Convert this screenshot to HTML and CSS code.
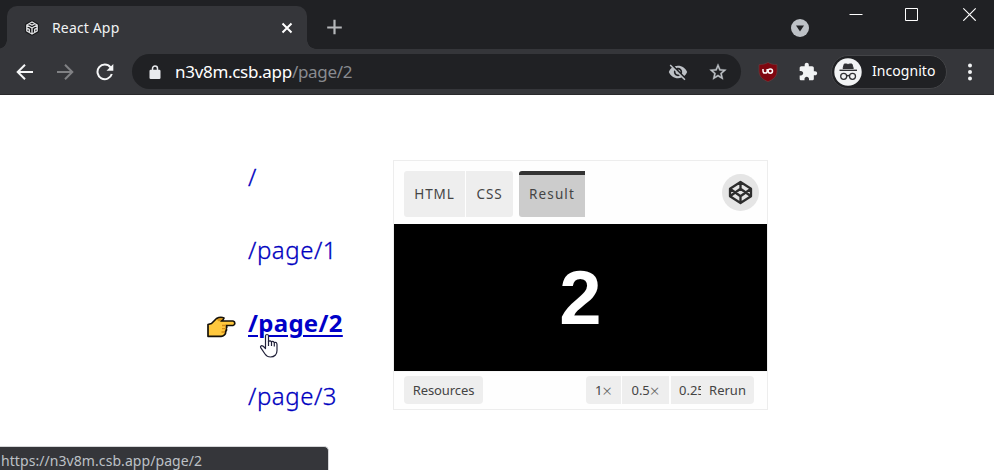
FILE: index.html
```html
<!DOCTYPE html>
<html lang="en">
<head>
<meta charset="utf-8">
<title>React App</title>
<link rel="stylesheet" href="styles.css">
</head>
<body>
<header class="browser">
  <div class="tabstrip">
    <div class="tab">
      <svg class="favicon" viewBox="0 0 16 16"><path fill="#17181a" stroke="#17181a" stroke-width="2.500" stroke-linejoin="round" d="M8 1.500 13.600 4.700V11.300L8 14.500 2.400 11.300V4.700Z"/><path fill="none" stroke="#e4e5e7" stroke-width="1.300" stroke-linejoin="round" d="M8 2 13.200 5V11L8 14 2.800 11V5ZM2.800 5 8 8 13.200 5M8 8V14M5.300 3.600 8 5.200 10.700 3.600M2.800 8 5.300 9.400V12.400M13.200 8 10.700 9.400V12.400"/></svg>
      <span class="tab-title">React App</span>
      <svg class="tab-close" viewBox="0 0 12 12"><path d="M1.500 1.500 10.500 10.500M10.500 1.500 1.500 10.500" stroke="#fff" stroke-width="2"/></svg>
    </div>
    <svg class="new-tab" viewBox="0 0 16 16"><path d="M7.500 .7V15.300M.2 8.500H14.800" stroke="#b5b7ba" stroke-width="2.200"/></svg>
    <svg class="tab-search" viewBox="0 0 18 18"><circle cx="9" cy="9" r="9" fill="#bdc1c6"/><path d="M5 6.500H13L9 12.500Z" fill="#202124"/></svg>
    <div class="window-buttons">
      <svg viewBox="0 0 14 14"><path d="M.5 7.500H13.500" stroke="#fff"/></svg>
      <svg viewBox="0 0 14 14"><path d="M.5 1.500H12.500V13.500H.5Z" fill="none" stroke="#fff"/></svg>
      <svg viewBox="0 0 14 14"><path d="M.3 1.300 12.700 13.700M12.700 1.300 .3 13.700" stroke="#fff" stroke-width="1.200"/></svg>
    </div>
  </div>
  <div class="toolbar">
    <svg class="nav" viewBox="0 0 18 18"><path d="M17 9H2M9 1.700 1.700 9 9 16.300" fill="none" stroke="#f5f6f7" stroke-width="2"/></svg>
    <svg class="nav" viewBox="0 0 18 18"><path d="M1 9H16M9 1.700 16.300 9 9 16.300" fill="none" stroke="#808184" stroke-width="2"/></svg>
    <svg class="nav" viewBox="0 0 18 18"><path d="M15.800 11A7.300 7.300 0 1 1 14.500 4.300" fill="none" stroke="#f5f6f7" stroke-width="2"/><path d="M17.300 1V7.800H10.500Z" fill="#f5f6f7"/></svg>
    <div class="omnibox">
      <svg class="lock" viewBox="0 0 12 14"><path d="M3.500 6V3.500A2.500 2.500 0 0 1 8.500 3.500V6" fill="none" stroke="#e8eaed" stroke-width="1.500"/><rect x=".5" y="4.800" width="11" height="9.200" rx="1.200" fill="#e8eaed"/></svg>
      <span class="url"><span class="host">n3v8m.csb.app</span><span class="path">/page/2</span></span>
      <svg class="eye" viewBox="0 0 24 24"><path fill="#bdc1c6" d="M12 7c2.760 0 5 2.240 5 5 0 .65-.13 1.260-.36 1.830l2.920 2.920c1.510-1.260 2.700-2.890 3.430-4.750-1.730-4.390-6-7.500-11-7.500-1.400 0-2.740.25-3.980.7l2.160 2.160C10.740 7.130 11.350 7 12 7zM2 4.270l2.280 2.280.46.46C3.080 8.300 1.780 10.020 1 12c1.730 4.390 6 7.500 11 7.500 1.550 0 3.030-.3 4.380-.84l.42.42L19.730 22 21 20.730 3.270 3 2 4.270zM7.530 9.800l1.550 1.550c-.05.21-.08.43-.08.65 0 1.660 1.340 3 3 3 .22 0 .44-.03.65-.08l1.550 1.550c-.67.33-1.410.53-2.200.53-2.760 0-5-2.240-5-5 0-.79.2-1.530.53-2.200zm4.310-.78 3.150 3.150.02-.16c0-1.660-1.340-3-3-3l-.17.010z"/></svg>
      <svg class="star" viewBox="0 0 24 24"><path fill="#bdc1c6" stroke="#bdc1c6" stroke-width=".4" d="M22 9.240l-7.190-.62L12 2 9.190 8.630 2 9.240l5.460 4.730L5.820 21 12 17.270 18.180 21l-1.630-7.030L22 9.240zM12 15.400l-3.760 2.270 1-4.280-3.320-2.880 4.380-.38L12 6.100l1.710 4.040 4.380.38-3.320 2.880 1 4.280L12 15.400z"/></svg>
    </div>
    <svg class="shield" viewBox="0 0 20 20"><path d="M10 .4C7.500 2 4.500 2.600 1 2.700V9C1 14.300 4.500 17.500 10 19.700 15.500 17.500 19 14.300 19 9V2.700C15.500 2.600 12.500 2 10 .4Z" fill="#7f0710" stroke="#6d4042" stroke-width=".6"/><path d="M5 7V9A2.100 2.100 0 0 0 9.200 9V7" fill="none" stroke="#fff" stroke-width="1.500"/><circle cx="12.300" cy="9.100" r="2.200" fill="none" stroke="#fff" stroke-width="1.500"/></svg>
    <svg class="puzzle" viewBox="0 0 24 24"><path fill="#f1f3f4" d="M20.500 11H19V7c0-1.100-.9-2-2-2h-4V3.500C13 2.120 11.880 1 10.500 1S8 2.120 8 3.500V5H4c-1.100 0-1.990.9-1.990 2v3.800H3.500c1.490 0 2.700 1.210 2.700 2.700s-1.210 2.700-2.700 2.700H2V20c0 1.100.9 2 2 2h3.800v-1.500c0-1.490 1.210-2.700 2.700-2.700s2.700 1.210 2.700 2.700V22H17c1.100 0 2-.9 2-2v-4h1.500c1.380 0 2.500-1.120 2.500-2.500S21.880 11 20.500 11z"/></svg>
    <div class="profile">
      <svg viewBox="0 0 28 28"><circle cx="14" cy="14" r="13.700" fill="#f1f3f4"/><path d="M5.500 12.300H23" stroke="#303134" stroke-width="1.400"/><path d="M9 10.500 10.300 6H12.500L14 6.500 15.700 6H17.900L19.300 10.500Z" fill="#303134" stroke="#303134"/><g fill="none" stroke="#303134" stroke-width="1.300"><circle cx="9.700" cy="18.300" r="3"/><circle cx="18.500" cy="18.300" r="3"/><path d="M12.700 18Q14.100 17 15.500 18"/></g></svg>
      <span>Incognito</span>
    </div>
    <svg class="dots" viewBox="0 0 4 18"><g fill="#f1f3f4"><circle cx="2" cy="2.500" r="2"/><circle cx="2" cy="9" r="2"/><circle cx="2" cy="15.500" r="2"/></g></svg>
  </div>
</header>
<main class="page">
  <nav class="links">
    <a>/</a>
    <a>/page/1</a>
    <a class="active">/page/2
      <svg class="hand" viewBox="0 0 30 24"><path d="M1.500 9.500 5 8.500 10 3.500Q14 1.500 17.500 3Q17 5 14.500 6H26.500A2.300 2.300 0 0 1 26.500 10.500H19.500Q21 12 19.500 13.500Q20.700 15 19 16.500Q19.500 19 17.500 20.200Q16.500 21.500 14 21.300H1.500Z" fill="#ffc83d" stroke="#15110a" stroke-width="1.700" stroke-linejoin="round"/><path d="M10 4.500Q14 2.500 16.500 3.500Q15 5.500 12.500 6.500Z" fill="#d99617"/><path d="M15.500 10.500H19.500M15.500 13.700H19.500M15 17H18.500" stroke="#d28b18" stroke-width="1.300"/></svg>
      <svg class="cursor" viewBox="0 0 20 25"><path d="M6.500 15.500V3A1.500 1.500 0 0 1 9.500 3V8.500Q11 7 12.500 8.800Q14 7.800 15.200 9.500Q17.700 8.700 18 11.500V17.500Q18 20 16.500 22Q14.500 24 11.500 24Q8 24 6 21L1.700 14.700Q1 13 2.800 12.600Q4 12.500 6.500 15.500Z" fill="#fff" stroke="#22223a" stroke-width="1.200" stroke-linejoin="round"/><path d="M9.500 8V13M12.500 8.800V13M15.300 9.500V13.500" stroke="#22223a" stroke-width="1.200"/></svg>
    </a>
    <a>/page/3</a>
  </nav>
  <section class="pen">
    <div class="pen-head">
      <span class="pen-tab first">HTML</span><span class="pen-tab css">CSS</span><span class="pen-tab result">Result</span>
      <svg class="logo" viewBox="0 0 37 37"><circle cx="18.500" cy="18.500" r="18.500" fill="#e5e5e5"/><path d="M18.500 8 29 14.700V22.300L18.500 29 8 22.300V14.700ZM18.500 8V14.500M18.500 22.500V29M8 14.700 18.500 22.300 29 14.700M8 22.300 18.500 14.700 29 22.300" fill="none" stroke="#2d2d2d" stroke-width="2.300" stroke-linejoin="round"/></svg>
    </div>
    <div class="stage">2</div>
    <div class="pen-foot">
      <span class="btn resources">Resources</span>
      <span class="btn one">1<i>×</i></span><span class="btn half">0.5<i>×</i></span><span class="btn quarter">0.25</span><span class="btn rerun">Rerun</span>
    </div>
  </section>
  <div class="status">https://n3v8m.csb.app/page/2</div>
</main>
</body>
</html>
```
FILE: styles.css
```css
* { box-sizing: border-box; }
body { margin: 0; width: 994px; height: 470px; overflow: hidden; background: #fff; font-family: "Noto Sans", sans-serif; }
svg { display: block; flex: none; }
.browser { height: 95px; background: #35363a; border-bottom: 1px solid #29292b; }
.tabstrip { height: 49px; background: #202124; display: flex; align-items: flex-start; }
.tab { position: relative; width: 300px; height: 43px; margin: 6px 0 0 7px; padding: 0 14px 0 17px; background: #35363a; border-radius: 10px 10px 0 0; display: flex; align-items: center; color: #f1f3f4; font-size: 14px; }
.tab::before, .tab::after { content: ""; position: absolute; bottom: 0; width: 9px; height: 9px; }
.tab::before { left: -9px; background: radial-gradient(circle at 0 0, transparent 8.5px, #35363a 9px); }
.tab::after { right: -9px; background: radial-gradient(circle at 100% 0, transparent 8.5px, #35363a 9px); }
.favicon { width: 16px; height: 16px; }
.tab-title { margin-left: 12px; letter-spacing: .15px; }
.tab-close { width: 12px; height: 12px; margin-left: auto; }
.new-tab { width: 16px; height: 16px; margin: 19px 0 0 20px; }
.tab-search { width: 18px; height: 18px; margin: 19px 0 0 448px; }
.window-buttons { display: flex; gap: 42px; margin: 7px 0 0 40px; }
.window-buttons svg { width: 14px; height: 14px; }
.window-buttons svg + svg { margin-right: 2px; }
.toolbar { height: 45px; display: flex; align-items: center; padding-left: 16px; }
.nav { width: 18px; height: 18px; margin-right: 22px; }
.omnibox { width: 609px; height: 35px; margin-left: -4px; padding: 0 13px 0 17px; background: #202124; border-radius: 18px; display: flex; align-items: center; }
.lock { width: 12px; height: 14px; }
.url { margin-left: 14px; font-size: 17px; letter-spacing: -.3px; line-height: 22px; white-space: nowrap; }
.host { color: #fff; }
.path { color: #898b90; }
.eye { width: 20px; height: 20px; margin-left: auto; }
.star { width: 20px; height: 20px; margin-left: 20px; }
.shield { width: 20px; height: 20px; margin-left: 17px; }
.puzzle { width: 20px; height: 20px; margin-left: 20px; }
.profile { width: 116px; height: 34px; margin-left: 13px; padding-left: 2px; border: 1px solid #434447; border-radius: 17px; background: #202124; display: flex; align-items: center; color: #fff; font-size: 14px; }
.profile svg { width: 28px; height: 28px; }
.profile span { margin: -2px 0 0 10px; letter-spacing: .05px; }
.dots { width: 4px; height: 18px; margin-left: 21px; }
.page { position: relative; height: 375px; display: flex; align-items: flex-start; }
.links { width: 145px; margin: 45px 0 0 248px; display: flex; flex-direction: column; align-items: flex-start; }
.links a { position: relative; height: 73px; line-height: 73px; font-size: 24px; font-weight: 300; color: #0000c0; white-space: nowrap; letter-spacing: .55px; -webkit-text-stroke: .3px #0000c0; }
.links .active { font-weight: 700; color: #0000c8; text-decoration: underline; text-decoration-thickness: 2px; text-underline-offset: 3px; letter-spacing: .3px; -webkit-text-stroke: 0; }
.hand { position: absolute; left: -42px; top: 29px; width: 31px; height: 24px; }
.cursor { position: absolute; left: 11px; top: 47px; width: 20px; height: 25px; }
.pen { width: 375px; height: 250px; margin-top: 65px; border: 1px solid #ededed; background: #fefefe; color: #444; }
.pen-head { height: 63px; padding: 10px 8px 0 10px; display: flex; align-items: flex-start; }
.pen-tab { height: 46px; line-height: 46px; background: #eee; font-size: 13.5px; letter-spacing: .9px; text-align: center; }
.first { width: 61px; border-radius: 3px 0 0 3px; margin-right: 1px; }
.css { width: 47px; border-radius: 0 3px 3px 0; margin-right: 6px; }
.result { width: 66px; background: #ccc; border-top: 4px solid #333; border-radius: 3px 0 0 3px; line-height: 38px; letter-spacing: 1.1px; }
.logo { width: 37px; height: 37px; margin: 3px 0 0 auto; }
.stage { height: 147px; background: #000; color: #fff; font: 700 76px/147px "Liberation Sans", sans-serif; text-align: center; }
.pen-foot { height: 38px; padding: 4px 13px 0 10px; display: flex; border-top: 1px solid #f7f7f7; }
.btn { height: 28px; line-height: 28px; background: #eee; font-size: 13px; text-align: center; overflow: hidden; white-space: nowrap; }
.btn i { font-style: normal; font-weight: 300; color: #666; font-size: 17px; line-height: 1; vertical-align: -2px; }
.resources { width: 79px; border-radius: 4px; margin-right: auto; letter-spacing: -.1px; }
.one { width: 35px; border-radius: 4px 0 0 4px; margin-right: 1px; }
.half { width: 47px; margin-right: 2px; }
.quarter { width: 30px; padding-left: 8px; text-align: left; }
.rerun { width: 53px; border-radius: 0 4px 4px 0; }
.status { position: absolute; left: -1px; bottom: 0; width: 330px; height: 24px; padding-left: 2px; line-height: 27px; background: #35363a; border: 1px solid #d5d6d8; border-width: 1px 1px 0 0; border-radius: 0 5px 0 0; color: #bdc1c6; font-size: 14px; letter-spacing: .07px; }
```
